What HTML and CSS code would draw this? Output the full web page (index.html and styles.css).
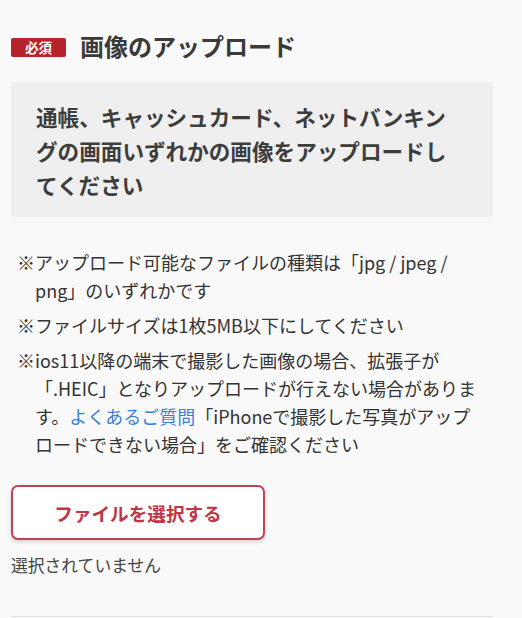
FILE: index.html
```html
<!DOCTYPE html>
<html lang="ja">
<head>
  <meta charset="UTF-8" />
  <meta name="viewport" content="width=device-width, initial-scale=1.0" />
  <title>画像のアップロード</title>
  <link rel="stylesheet" href="styles.css">
</head>
<body>

  <div class="section">
    <!-- Heading -->
    <div class="heading">
      <span class="badge">必須</span>
      <h2>画像のアップロード</h2>
    </div>

    <!-- Instruction box -->
    <div class="notice">通帳、キャッシュカード、ネットバンキングの画面いずれかの画像をアップロードしてください</div>

    <!-- Notes -->
    <ul class="notes">
      <li>※アップロード可能なファイルの種類は「jpg / jpeg / png」のいずれかです</li>
      <li>※ファイルサイズは1枚5MB以下にしてください</li>
      <li>※ios11以降の端末で撮影した画像の場合、拡張子が「.HEIC」となりアップロードが行えない場合があります。<a href="#">よくあるご質問</a>「iPhoneで撮影した写真がアップロードできない場合」をご確認ください</li>
    </ul>

    <!-- File picker -->
    <label class="file-btn">
      <input type="file" accept=".jpg,.jpeg,.png" />
      ファイルを選択する
    </label>
    <p class="file-name">選択されていません</p>

    <div class="divider"></div>
  </div>

</body>
</html>
```

FILE: styles.css
```css
body {
  margin: 0;
  background: #f9f9f9;
  font-family: "Noto Sans CJK JP", "Noto Sans", sans-serif;
  color: #333;
}
.section {
  width: 482px;
  padding: 31px 0 0 11px;
}
.heading {
  display: flex;
  align-items: center;
  height: 30px;
}
.badge {
  display: inline-block;
  width: 55px;
  height: 19px;
  line-height: 19px;
  background: #b8232b;
  color: #fff;
  font-size: 13.5px;
  font-weight: bold;
  text-align: center;
  border-radius: 2px;
  margin: 2px 14px 0 0;
}
.heading h2 {
  margin: 0;
  font-size: 24px;
  line-height: 30px;
  font-weight: bold;
  color: #3a3a3a;
}
.notice {
  margin-top: 21px;
  background: #efefef;
  padding: 18px 40px 15px 25px;
  font-size: 21.6px;
  line-height: 34px;
  font-weight: bold;
  color: #3d3d3d;
}
.notes {
  list-style: none;
  margin: 31px 7px 0 6px;
  padding: 0;
  font-size: 18px;
  line-height: 28px;
}
.notes li {
  padding-left: 1em;
  text-indent: -1em;
  margin-bottom: 7px;
}
.notes li:last-child {
  margin-bottom: 0;
}
.notes a {
  color: #3b7fd6;
  text-decoration: none;
}
.file-btn {
  margin-top: 27px;
  display: flex;
  align-items: center;
  justify-content: center;
  box-sizing: border-box;
  width: 254px;
  height: 55px;
  background: #fff;
  border: 2px solid #c24152;
  border-radius: 7px;
  box-shadow: 0 2px 4px rgba(0, 0, 0, 0.15);
  color: #c13545;
  font-size: 18.6px;
  font-weight: bold;
  cursor: pointer;
}
.file-btn input {
  display: none;
}
.file-name {
  margin: 11px 0 0;
  font-size: 16.8px;
  line-height: 28px;
  color: #444;
}
.divider {
  margin-top: 37px;
  border-top: 1px solid #e0e0e0;
}
```
